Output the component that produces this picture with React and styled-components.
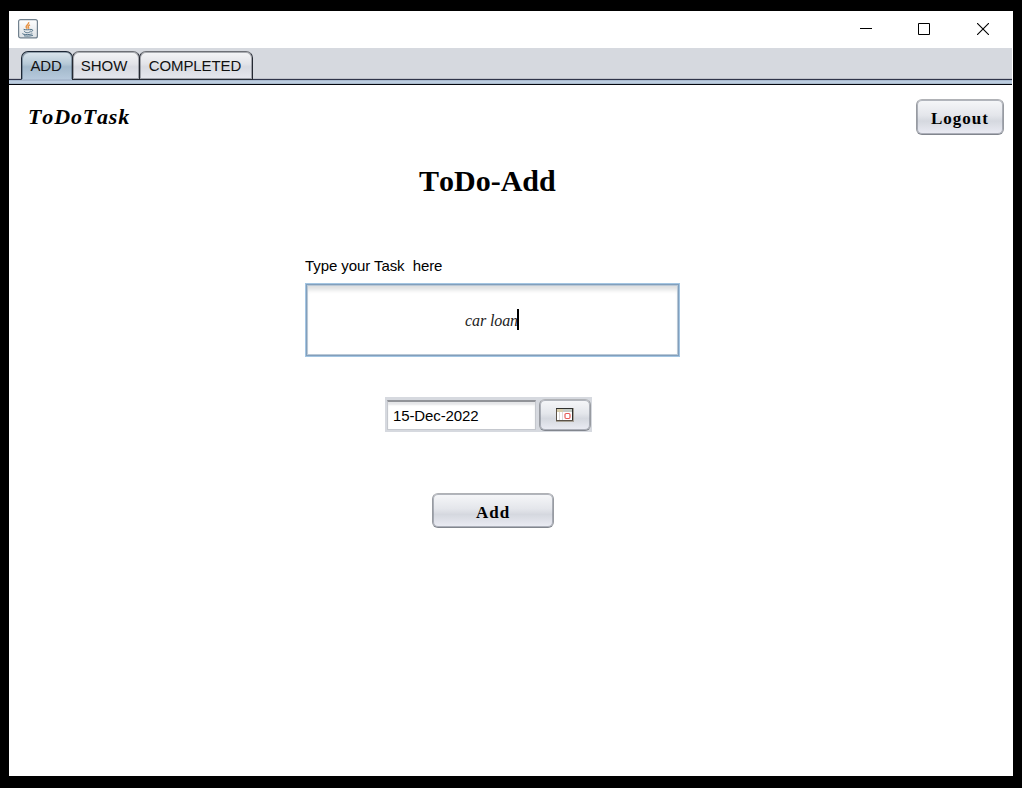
import React from "react";
import styled, { createGlobalStyle, css } from "styled-components";

const sans = `"Liberation Sans", Arial, sans-serif`;
const serif = `"Liberation Serif", "Times New Roman", serif`;

const GlobalStyle = createGlobalStyle`
  * { box-sizing: border-box; }
  body { margin: 0; background: #000; overflow: hidden; }
`;

const Screen = styled.div`
  width: 1022px;
  height: 788px;
  padding: 11px 9px 12px;
  background: #000;
`;

const Window = styled.main`
  width: 1004px;
  height: 765px;
  display: flex;
  flex-direction: column;
  background: #fff;
  color: #000;
  font: 15px/20px ${sans};
`;

const TitleBar = styled.header`
  height: 37px;
  flex: none;
  display: flex;
  align-items: flex-start;
  justify-content: space-between;
  padding: 8px 1px 0 9px;
`;

const WindowControls = styled.div`
  display: flex;
`;

const WindowControl = styled.button`
  width: 58.5px;
  height: 20px;
  padding: 0;
  border: 0;
  background: none;
  display: grid;
  place-items: center;
  svg { display: block; }
`;

const TabBar = styled.nav`
  width: 1003px;
  height: 37px;
  flex: none;
  display: flex;
  align-items: flex-start;
  padding: 3px 0 0 12px;
  background: linear-gradient(
    #d6d9df 0 30px, #bfc2ca 30px 31px, #30354a 31px 32px,
    #a9bacf 32px 33px, #bccde0 33px 35px, #a9bacb 35px 36px, #05070d 36px 37px
  );
`;

const Tab = styled.button`
  width: ${(p) => p.$width}px;
  height: 29px;
  margin: 0 0 0 ${(p) => (p.$first ? 0 : -1)}px;
  padding: 0 ${(p) => p.$padRight ?? 2}px 0 0;
  border: 1px solid #252932;
  border-top-color: #6d7076;
  border-radius: 7px 7px 0 0;
  box-shadow: inset 0 0 0 1px rgba(60, 65, 75, 0.4);
  background: linear-gradient(#f4f5f7, #e2e3e8 45%, #d8dae1 55%, #e6e7ee);
  font: 15px/27px ${sans};
  letter-spacing: ${(p) => p.$spacing || 0}px;
  color: #111;
  ${(p) => p.$active && css`
    padding-bottom: 1px;
    border-color: #1c2735;
    border-bottom: 1px solid #a9bacf;
    box-shadow: inset 1px 1px 0 rgba(40, 60, 80, 0.4), inset -1px 0 0 rgba(40, 60, 80, 0.4);
    background: linear-gradient(#dbe6ed, #b5c8d6 45%, #a3b9cb 55%, #b6c9dc);
  `}
`;

const Content = styled.section`
  flex: 1;
  display: flex;
  flex-direction: column;
`;

const TopRow = styled.div`
  height: 50px;
  display: flex;
  justify-content: space-between;
  align-items: flex-start;
  padding: 14px 9px 0 19px;
`;

const Brand = styled.div`
  margin-top: 5px;
  font: italic bold 22px/26px ${serif};
  font-kerning: none;
  letter-spacing: 0.85px;
`;

const Button = styled.button`
  width: ${(p) => p.$width}px;
  height: ${(p) => p.$height || 36}px;
  padding: ${(p) => p.$top ?? 3}px 0 0;
  display: flex;
  align-items: center;
  justify-content: center;
  border: 1px solid #96999f;
  border-color: #b0b2b6 #989ba1 #82868e;
  border-radius: 6px;
  box-shadow: inset 0 0 0 1px rgba(110, 115, 128, 0.5);
  background: linear-gradient(#f6f7f9, #e4e6eb 45%, #d5d8df 62%, #ebecf4 100%);
  font: bold 17px/20px ${serif};
  letter-spacing: 1px;
  color: #000;
  svg { display: block; }
`;

const Heading = styled.h1`
  margin: 28px 0 0 410px;
  font: bold 30px/36px ${serif};
  font-kerning: none;
`;

const Form = styled.form`
  display: flex;
  flex-direction: column;
  align-items: flex-start;
  padding: 57px 0 0 296px;
`;

const Label = styled.label`
  white-space: pre;
  letter-spacing: -0.08px;
`;

const TaskField = styled.div`
  width: 375px;
  height: 74px;
  margin-top: 7px;
  display: flex;
  align-items: center;
  justify-content: center;
  border: 1px solid #a3c5e2;
  box-shadow: inset 0 0 0 1px #829fbc, inset 0 0 0 2px #b9c8d6, inset 0 6px 4px #dedfe0;
  font: italic 16px/21px ${serif};
  color: #222;
`;

const Caret = styled.span`
  width: 2px;
  height: 21px;
  margin: -1px 0 0 -1px;
  background: #000;
`;

const TaskText = styled.span`
  margin-left: -1px;
  letter-spacing: -0.12px;
`;

const DatePicker = styled.div`
  width: 207px;
  height: 35px;
  margin: 40px 0 0 80px;
  padding: 2px 1px 2px 2px;
  display: flex;
  justify-content: space-between;
  align-items: center;
  background: #d6d9df;
`;

const DateField = styled.div`
  width: 149px;
  height: 30px;
  padding: 1px 5px 0;
  display: flex;
  align-items: center;
  border: 1px solid #c5c8ce;
  border-top: 2px solid #919398;
  background: #fff;
  box-shadow: inset 0 3px 2px #e5e6e8;
  letter-spacing: -0.12px;
`;

const AddRow = styled.div`
  margin: 61px 0 0 127px;
`;

const JavaIcon = () => (
  <svg width="20" height="20" viewBox="0 0 20 20" fill="none">
    <defs>
      <linearGradient id="tile" x2="0" y2="1">
        <stop stopColor="#fff" /><stop offset="1" stopColor="#dce1e5" />
      </linearGradient>
    </defs>
    <rect x=".6" y=".6" width="18.8" height="18.3" rx="2" fill="url(#tile)" stroke="#71818e" strokeWidth="1.2" />
    <path d="M10.6 3.2c1 2-3.2 3-2.4 5 .2.6.8 1 1.2 1.4M12 5.9c-1.6.8-2.4 1.7-1.5 2.6.4.5.3.9-.1 1.3" stroke="#e79345" strokeWidth="1.5" />
    <path d="M5.6 10.3c1.8.7 5.8.6 7.5 0M6.2 11.7c.2 2.7 6 2.7 6.4 0M13 10.6c2.4-.7 2.1 2-.3 2.5M4.5 14.4c-.8 1.5 9.4 1.6 9.8.1M6 16.8c2.6.5 7 .4 9-.6" stroke="#527288" strokeWidth="1" />
  </svg>
);

const CalendarIcon = () => (
  <svg width="18" height="14" viewBox="0 0 18 14" fill="none">
    <rect width="18" height="14" fill="#a8a298" />
    <rect x="1" y="1" width="15" height="11" fill="#fff" />
    <rect x="1" y="1" width="15" height="3" fill="#d8cdab" />
    <rect x="7" y="1" width="9" height="3" fill="#c5cbc5" />
    <path d="M0 .5h17M16.5 0v13" stroke="#2f302e" />
    <path d="M.5 1v12M0 12.5h17" stroke="#5a5148" />
    <path d="M3.5 4v8M6.5 4v8" stroke="#dedada" />
    <rect x="9" y="5.5" width="5" height="5" rx="1.2" fill="#fff" stroke="#e65c58" strokeWidth="1.2" />
  </svg>
);

const TABS = [
  { label: "ADD", width: 52, active: true, spacing: -0.2 },
  { label: "SHOW", width: 68, spacing: 0, padRight: 4 },
  { label: "COMPLETED", width: 114, spacing: -0.1, padRight: 2 },
];

export default function App() {
  return (
    <Screen>
      <GlobalStyle />
      <Window>
        <TitleBar>
          <JavaIcon />
          <WindowControls>
            <WindowControl aria-label="Minimize">
              <svg width="12" height="12"><path d="M0 5.5h12" stroke="#000" /></svg>
            </WindowControl>
            <WindowControl aria-label="Maximize">
              <svg width="12" height="12"><path d="M.5.5h11v11H.5z" fill="none" stroke="#000" /></svg>
            </WindowControl>
            <WindowControl aria-label="Close">
              <svg width="12" height="12"><path d="M0 0l12 12M12 0L0 12" stroke="#000" strokeWidth="1.1" /></svg>
            </WindowControl>
          </WindowControls>
        </TitleBar>
        <TabBar>
          {TABS.map((t, i) => (
            <Tab
              key={t.label}
              $width={t.width}
              $active={t.active}
              $spacing={t.spacing}
              $padRight={t.padRight}
              $first={i === 0}
            >
              {t.label}
            </Tab>
          ))}
        </TabBar>
        <Content>
          <TopRow>
            <Brand>ToDoTask</Brand>
            <Button $width={88}>Logout</Button>
          </TopRow>
          <Heading>ToDo-Add</Heading>
          <Form>
            <Label>{"Type your Task  here"}</Label>
            <TaskField><TaskText>car loan</TaskText><Caret /></TaskField>
            <DatePicker>
              <DateField>15-Dec-2022</DateField>
              <Button type="button" aria-label="Choose date" $width={52} $height={32} $top={0}>
                <CalendarIcon />
              </Button>
            </DatePicker>
            <AddRow>
              <Button type="button" $width={122} $height={35} $top={4}>Add</Button>
            </AddRow>
          </Form>
        </Content>
      </Window>
    </Screen>
  );
}
